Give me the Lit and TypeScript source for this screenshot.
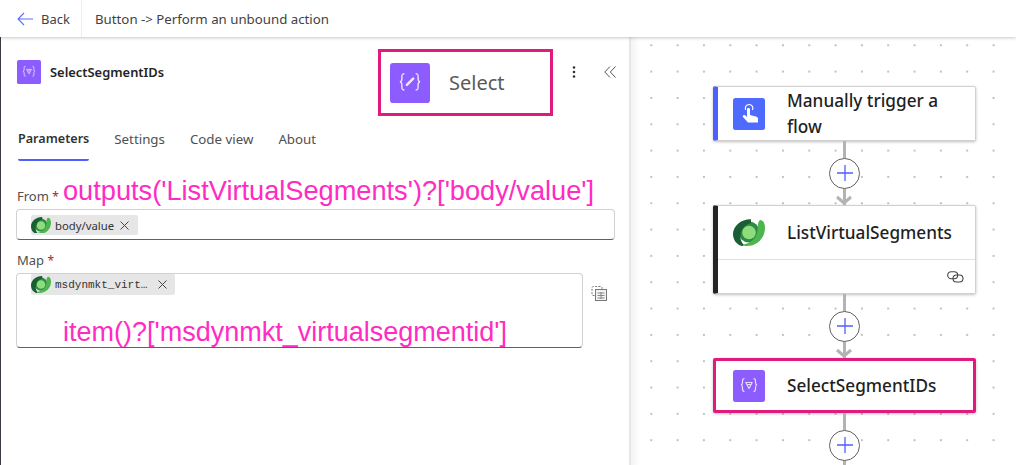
import { LitElement, html, css, svg } from "lit";
import { customElement } from "lit/decorators.js";

const selectIcon = (s: number, bolt = false) => html`<svg width=${s} height=${s} viewBox="0 0 32 32" fill="none">
  <rect width="32" height="32" rx="2.500" fill="#8c5cff"/>
  <path d="M11.500 8.500c-2 0-2 1-2 2.500v1.500c0 1.500-.6 2.300-1.500 2.500.9.2 1.500 1 1.500 2.500V19c0 1.500 0 2.500 2 2.500M20.500 8.500c2 0 2 1 2 2.500v1.500c0 1.500.6 2.300 1.500 2.500-.9.2-1.500 1-1.500 2.500V19c0 1.500 0 2.500-2 2.500" stroke="#e6dcff" stroke-width="1.200"/>
  ${bolt
    ? svg`<path d="M13.500 17.500 18.500 12.500" stroke="#eee6ff" stroke-width="2" stroke-linecap="round"/>`
    : svg`<path d="M12.800 12.500h6.400L16 18.500zM14.500 14.500h3" stroke="#e6dcff" stroke-width="1.100" stroke-linejoin="round"/>`}
</svg>`;

const dataverse = (w: number) => html`<svg width=${w} height=${w * 27 / 32} viewBox="0 0 32 27">
  <circle cx="16" cy="13" r="10.500" fill="#2e8b45"/>
  <path d="M27 1C30 1 32 4 32 9 32 19 24 27 14 27 12 27 10 26.500 9 25.500 16 25 22 21 24 14 25.500 9 24 3 27 1z" fill="#4fb54f"/>
  <path d="M18 .2C8 0 0 7 0 15 0 21 4 26 9 27 10.500 27 11 26 10 25 7 21 6.500 16 9 11 11 7 14 5 18 4z" fill="#1a5e33"/>
  <circle cx="16" cy="13.500" r="6.800" fill="#8fdc7c"/>
</svg>`;

const closeX = html`<svg class="x" width="9" height="9" viewBox="0 0 9 9"><path d="M.5.5l8 8M8.500.5l-8 8" stroke="#444" stroke-width="1"/></svg>`;

const plus = html`<div class="circle"><svg width="16" height="16" viewBox="0 0 16 16"><path d="M8 0v16M0 8h16" stroke="#4f5fff" stroke-width="1.300"/></svg></div>`;

const connector = (arrow = true) => html`<div class="conn">
  <div class="line"></div>
  ${plus}
  ${arrow
    ? html`<svg class="arrow" width="18" height="10" viewBox="0 0 18 10" fill="none"><path d="M2 2l7 6 7-6" stroke="#b3b3b3" stroke-width="3"/></svg>`
    : ""}
</div>`;

@customElement("app-root")
export class AppRoot extends LitElement {
  static styles = css`
    :host {
      display: block;
      width: 1016px;
      height: 465px;
      overflow: hidden;
      position: relative;
      background: #fff;
      color: #242424;
      font-family: "Noto Sans", "Open Sans", sans-serif;
    }
    .top {
      height: 37px;
      display: flex;
      align-items: stretch;
      box-shadow: 0 1px 3px rgba(0, 0, 0, 0.22);
      position: relative;
      z-index: 2;
      background: #fff;
      font-size: 13px;
      color: #424242;
    }
    .back {
      width: 82px;
      box-sizing: border-box;
      padding-left: 17px;
      display: flex;
      align-items: center;
      gap: 8px;
      border-right: 1px solid #eee;
    }
    .crumb {
      display: flex;
      align-items: center;
      padding-left: 13px;
      font-size: 13.250px;
    }
    .main {
      display: flex;
      height: 428px;
    }
    .panel {
      width: 631px;
      box-sizing: border-box;
      border-left: 1px solid #3b3a45;
      border-right: 2px solid #e6e6e6;
      padding: 0 14px 0 15px;
      position: relative;
      flex: none;
    }
    .head {
      height: 70px;
      padding-top: 23px;
      box-sizing: border-box;
      display: flex;
      align-items: flex-start;
      gap: 9px;
      padding-left: 1px;
    }
    .title {
      font-size: 12.900px;
      font-weight: 600;
      line-height: 25px;
    }
    .spacer { flex: 1; }
    .tools {
      display: flex;
      align-items: center;
      height: 24px;
      gap: 28px;
      margin-right: -1px;
    }
    .tabs {
      display: flex;
      gap: 25px;
      font-size: 13.300px;
      color: #505050;
      padding-left: 2px;
      margin-top: 21px;
    }
    .tab {
      height: 33px;
      line-height: 22px;
      box-sizing: border-box;
    }
    .tab.on {
      font-weight: 600;
      font-size: 12.600px;
      color: #333;
      border-bottom: 2.500px solid #4f5fff;
      border-radius: 0 0 2px 2px;
    }
    .label {
      font-size: 13px;
      color: #505050;
      line-height: 18px;
      padding-left: 1px;
    }
    .label b {
      color: #a4262c;
      font-weight: 400;
      font-size: 12px;
    }
    .from { margin-top: 26px; }
    .map { margin-top: 11px; }
    .input {
      box-sizing: border-box;
      border: 1px solid #d1d1d1;
      border-bottom-color: #616161;
      border-radius: 4px;
      background: #fff;
      padding-left: 14px;
      display: flex;
      align-items: flex-start;
    }
    .i1 { width: 599px; height: 31px; padding-top: 5px; margin-top: 3px; }
    .i2 { width: 567px; height: 75px; padding-top: 0; margin-top: 3px; }
    .maprow {
      display: flex;
      gap: 8px;
    }
    .tblicon { margin-top: 15px; }
    .chip {
      display: flex;
      align-items: center;
      height: 20px;
      background: #e6e6e6;
      border-radius: 2px;
      font-size: 11.300px;
      color: #333;
    }
    .chip > svg:first-child { margin-right: 4px; }
    .c1 { width: 107px; }
    .c1 .x { margin-left: 6px; }
    .c2 {
      width: 144px;
      font-family: "Liberation Mono", monospace;
      font-size: 11px;
      height: 21px;
    }
    .c2 .x { margin-left: 11px; }
    .chiptxt { white-space: nowrap; }
    .note {
      position: absolute;
      color: #ff2bc2;
      font-family: "Liberation Sans", Arial, sans-serif;
      line-height: 30px;
      white-space: nowrap;
    }
    .n1 { left: 62px; top: 139px; font-size: 27.200px; }
    .n2 { left: 62px; top: 280px; font-size: 27px; }
    .callout {
      position: absolute;
      left: 377px;
      top: 12px;
      width: 175px;
      height: 67px;
      box-sizing: border-box;
      border: 3px solid #e01b7d;
      background: #fff;
      display: flex;
      align-items: center;
      padding-left: 9px;
      gap: 19px;
      font-size: 20px;
      color: #5a5a5a;
    }
    .canvas {
      flex: 1;
      box-sizing: border-box;
      padding: 49px 0 0 82px;
      background-color: #fff;
      background-image:
        linear-gradient(to right, #f4f4f4, rgba(255, 255, 255, 0) 9px),
        radial-gradient(circle at 1px 1px, #c0c0c0 0.8px, transparent 1px);
      background-size: auto, 26.330px 26.330px;
      background-position: 0 0, 19.300px 7.300px;
    }
    .flow { width: 263px; }
    .node {
      box-sizing: border-box;
      width: 263px;
      background: #fff;
      border: 1px solid #d1d1d1;
      border-left: 5px solid #4f5fff;
      border-radius: 2px;
      box-shadow: 0 1px 3px rgba(0, 0, 0, 0.25);
      font-size: 17.200px;
      font-weight: 500;
      color: #1f1f1f;
    }
    .nrow {
      height: 53px;
      display: flex;
      align-items: center;
      gap: 22px;
      padding-left: 15px;
      line-height: 26px;
    }
    .nrow svg { flex: none; }
    .n-black { border-left-color: #242424; height: 89px; }
    .foot {
      border-top: 1px solid #e0e0e0;
      height: 33px;
      display: flex;
      justify-content: flex-end;
      align-items: center;
      padding-right: 11px;
    }
    .n-sel {
      border: 3px solid #e01b7d;
      height: 55px;
    }
    .n-sel .nrow { height: 49px; padding-left: 17px; }
    .conn {
      height: 64px;
      position: relative;
      display: flex;
      justify-content: center;
      align-items: center;
    }
    .line {
      position: absolute;
      top: 0;
      bottom: 0;
      left: 130px;
      width: 3px;
      background: #b3b3b3;
    }
    .circle {
      width: 31px;
      height: 31px;
      box-sizing: border-box;
      border: 1px solid #616161;
      border-radius: 50%;
      background: #fff;
      display: flex;
      align-items: center;
      justify-content: center;
      position: relative;
    }
    .arrow {
      position: absolute;
      left: 122px;
      bottom: 0;
    }
  `;

  render() {
    return html`
      <div class="top">
        <div class="back">
          <svg width="16" height="14" viewBox="0 0 16 14" fill="none"><path d="M7 1 1 7l6 6M1 7h15" stroke="#5b6cff" stroke-width="1.100"/></svg>
          <span>Back</span>
        </div>
        <div class="crumb">Button -&gt; Perform an unbound action</div>
      </div>
      <div class="main">
        <div class="panel">
          <div class="head">
            ${selectIcon(24)}
            <span class="title">SelectSegmentIDs</span>
            <span class="spacer"></span>
            <div class="tools">
              <svg width="4" height="14" viewBox="0 0 4 14"><circle cx="2" cy="2.500" r="1.300" fill="#333"/><circle cx="2" cy="7" r="1.300" fill="#333"/><circle cx="2" cy="11.500" r="1.300" fill="#333"/></svg>
              <svg width="12" height="12" viewBox="0 0 12 12" fill="none"><path d="M6 .5.800 6 6 11.500M11.500.5 6.300 6l5.200 5.500" stroke="#555" stroke-width="1"/></svg>
            </div>
          </div>
          <div class="tabs">
            <div class="tab on">Parameters</div>
            <div class="tab">Settings</div>
            <div class="tab">Code view</div>
            <div class="tab">About</div>
          </div>
          <div class="label from">From <b>*</b></div>
          <div class="input i1">
            <div class="chip c1">
              ${dataverse(20)}
              <span class="chiptxt">body/value</span>
              ${closeX}
            </div>
          </div>
          <div class="label map">Map <b>*</b></div>
          <div class="maprow">
            <div class="input i2">
              <div class="chip c2">
                ${dataverse(20)}
                <span class="chiptxt">msdynmkt_virt…</span>
                ${closeX}
              </div>
            </div>
            <svg class="tblicon" width="16" height="16" viewBox="0 0 16 16" fill="none">
              <path d="M3.500 10.500H2a1 1 0 0 1-1-1V3a1.500 1.500 0 0 1 1.500-1.500H10a1 1 0 0 1 1 1V4" stroke="#777" stroke-dasharray="2 1.300"/>
              <rect x="4.500" y="4.500" width="11" height="11" fill="#f2f2f2" stroke="#777"/>
              <path d="M6.500 8h7M6.500 10.500h7M6.500 13h7M10 7v7" stroke="#888"/>
            </svg>
          </div>
          <div class="note n1">outputs('ListVirtualSegments')?['body/value']</div>
          <div class="note n2">item()?['msdynmkt_virtualsegmentid']</div>
          <div class="callout">
            ${selectIcon(40, true)}
            <span>Select</span>
          </div>
        </div>
        <div class="canvas">
          <div class="flow">
            <div class="node">
              <div class="nrow">
                <svg width="32" height="32" viewBox="0 0 32 32">
                  <rect width="32" height="32" rx="2.500" fill="#4f6bff"/>
                  <path d="M12.700 12a3.800 3.800 0 1 1 6.800 0" fill="none" stroke="#fff" stroke-width="1.200"/>
                  <path d="M14 11c0-1.500 3-1.500 3 0v6l6 1.500c1.500.4 2 1.300 2 2.500v3.500H15l-5-5.500c-1-1.300.8-2.700 2-1.700l2 1.600z" fill="#fff"/>
                </svg>
                <span>Manually trigger a flow</span>
              </div>
            </div>
            ${connector()}
            <div class="node n-black">
              <div class="nrow">
                ${dataverse(32)}
                <span>ListVirtualSegments</span>
              </div>
              <div class="foot">
                <svg width="17" height="12" viewBox="0 0 17 12" fill="none"><rect x=".7" y=".7" width="10" height="7" rx="3.500" stroke="#444" stroke-width="1.100"/><rect x="6" y="4" width="10" height="7" rx="3.500" stroke="#444" stroke-width="1.100"/></svg>
              </div>
            </div>
            ${connector()}
            <div class="node n-sel">
              <div class="nrow">
                ${selectIcon(32)}
                <span>SelectSegmentIDs</span>
              </div>
            </div>
            ${connector(false)}
          </div>
        </div>
      </div>
    `;
  }
}
